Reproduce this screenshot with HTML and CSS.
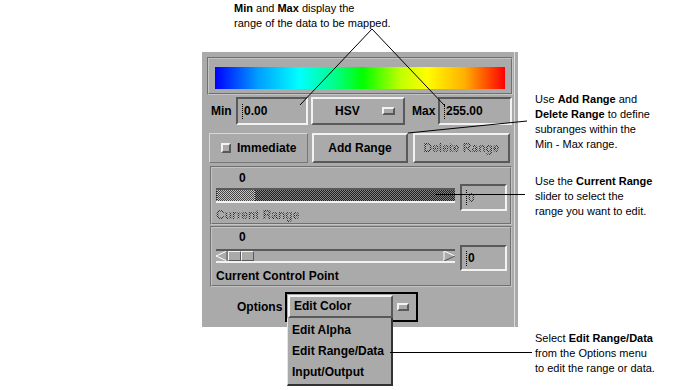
FILE: index.html
```html
<!DOCTYPE html>
<html lang="en">

<head>
  <meta charset="UTF-8">
  <meta name="viewport" content="width=device-width, initial-scale=1.0">
  <title>Colormap Editor - Range Controls</title>
  <link rel="stylesheet" href="styles.css">
</head>

<body>
  <div class="figure">
    <p class="note note-top"><b>Min</b> and <b>Max</b> display the<br>range of the data to be mapped.</p>

    <div class="main">
      <div class="panel">
        <div class="colorbar-frame">
          <div class="colorbar"></div>
        </div>

        <div class="range-row">
          <span class="lbl lbl-min">Min</span>
          <div class="field field-min"><span class="caret"></span>0.00</div>
          <div class="btn btn-hsv">HSV<span class="indicator"></span></div>
          <span class="lbl lbl-max">Max</span>
          <div class="field field-max"><span class="caret"></span>255.00</div>
        </div>

        <div class="button-row">
          <div class="toggle"><span class="check"></span>Immediate</div>
          <div class="btn btn-add">Add Range</div>
          <div class="btn btn-delete"><span class="stipple-text">Delete Range</span></div>
        </div>

        <div class="section section-range">
          <div class="scale-value">0</div>
          <div class="trough trough-disabled"><span class="thumb-disabled"></span></div>
          <div class="field field-small"><span class="caret"></span><span class="stipple-text">0</span></div>
          <div class="scale-label"><span class="stipple-text">Current Range</span></div>
        </div>

        <div class="section section-point">
          <div class="scale-value">0</div>
          <div class="trough">
            <svg class="arrow" width="12" height="10" viewBox="0 0 12 10">
              <polygon points="11,0 11,10 0,5" fill="#aaa" />
              <polyline points="11,0 0,5 11,10" fill="none" stroke="#fff" stroke-width="1" />
              <line x1="11" y1="0" x2="11" y2="10" stroke="#555" />
            </svg>
            <span class="thumb"></span><span class="thumb"></span>
            <svg class="arrow arrow-right" width="12" height="10" viewBox="0 0 12 10">
              <polygon points="1,0 1,10 12,5" fill="#aaa" />
              <polyline points="1,10 1,0 12,5" fill="none" stroke="#fff" stroke-width="1" />
              <line x1="1" y1="10" x2="12" y2="5" stroke="#555" />
            </svg>
          </div>
          <div class="field field-small"><span class="caret"></span>0</div>
          <div class="scale-label">Current Control Point</div>
        </div>

        <div class="options-row">
          <span class="lbl">Options</span>
          <div class="option-menu">
            <div class="option-current">Edit Color</div>
            <span class="indicator"></span>
            <ul class="menu">
              <li>Edit Alpha</li>
              <li>Edit Range/Data</li>
              <li>Input/Output</li>
            </ul>
          </div>
        </div>
      </div>

      <div class="side-notes">
        <p class="note note-add">Use <b>Add Range</b> and<br><b>Delete Range</b> to define<br>subranges within the<br>Min - Max range.</p>
        <p class="note note-current">Use the <b>Current Range</b><br>slider to select the<br>range you want to edit.</p>
        <p class="note note-select">Select <b>Edit Range/Data</b><br>from the Options menu<br>to edit the range or data.</p>
      </div>
    </div>

    <!-- leader lines from the notes to the widgets -->
    <svg class="leaders" width="700" height="390" viewBox="0 0 700 390">
      <line x1="372" y1="29" x2="300" y2="105" />
      <line x1="372" y1="29" x2="445" y2="106" />
      <line x1="408" y1="133" x2="527" y2="121" />
      <line x1="435" y1="194.5" x2="525" y2="194.5" />
      <line x1="390" y1="352.5" x2="532" y2="352.5" />
    </svg>
  </div>
</body>

</html>
```

FILE: styles.css
```css
* {
  box-sizing: border-box;
  margin: 0;
  padding: 0;
}

body {
  background-color: #fff;
  font-family: 'Liberation Sans', Arial, sans-serif;
  color: #000;
}

.figure {
  position: relative;
  width: 700px;
  height: 390px;
  overflow: hidden;
}

/* callout text */
.note {
  font-size: 11px;
  line-height: 15px;
}

.note-top {
  height: 52px;
  padding-left: 234px;
  padding-top: 1px;
}

.main {
  display: flex;
  align-items: flex-start;
}

.side-notes {
  display: flex;
  flex-direction: column;
  margin-left: 17px;
}

.note-add {
  margin-top: 40px;
}

.note-current {
  margin-top: 22px;
}

.note-select {
  margin-top: 112px;
}

.leaders {
  position: absolute;
  left: 0;
  top: 0;
  pointer-events: none;
}

.leaders line {
  stroke: #000;
  stroke-width: 1;
}

/* motif style panel */
.panel {
  margin-left: 202px;
  width: 316px;
  height: 275px;
  padding: 5px 0 0 0;
  background-color: #aaa;
  font-size: 12px;
  font-weight: bold;
  line-height: 14px;
  box-shadow: inset -3px 0 0 #aaa, inset -4px 0 0 #ddd;
}

.colorbar-frame {
  margin: 0 5px;
  height: 38px;
  padding: 8px 6px;
  border: 2px groove #c4c4c4;
}

.colorbar {
  height: 22px;
  background: linear-gradient(to right, #0000ff 0%, #00a0ff 15%, #00ffff 29%, #00ff80 42%, #00ff00 51%, #c0ff00 64%, #ffff00 73%, #ffb000 86%, #ff0000 100%);
}

.range-row {
  display: flex;
  align-items: center;
  height: 28px;
  margin-top: 2px;
}

.lbl-min {
  margin-left: 9px;
  width: 25px;
}

.lbl-max {
  margin-left: 7px;
  width: 26px;
}

.field {
  display: flex;
  align-items: center;
  height: 28px;
  padding-left: 3px;
  border: 2px solid;
  border-color: #595959 #f2f2f2 #f2f2f2 #595959;
  background-color: #aaa;
}

.field-min {
  width: 72px;
}

.field-max {
  width: 74px;
}

.caret {
  display: inline-block;
  width: 3px;
  height: 15px;
  background: repeating-linear-gradient(#000 0 1px, transparent 1px 2px) center / 1px 100% no-repeat;
}

.btn {
  display: flex;
  align-items: center;
  justify-content: center;
  border: 2px solid;
  border-color: #f2f2f2 #595959 #595959 #f2f2f2;
}

.btn-hsv {
  width: 94px;
  height: 28px;
  margin-left: 3px;
  padding-left: 22px;
  justify-content: flex-start;
}

.btn-hsv .indicator {
  margin-left: 22px;
}

.indicator {
  display: inline-block;
  width: 13px;
  height: 8px;
  border: 2px solid;
  border-color: #f2f2f2 #595959 #595959 #f2f2f2;
}

.button-row {
  display: flex;
  height: 30px;
  margin-top: 8px;
}

.toggle {
  display: flex;
  align-items: center;
  width: 99px;
  margin-left: 7px;
  padding-left: 11px;
  border: 1px solid;
  border-color: #d8d8d8 #777 #777 #d8d8d8;
}

.check {
  width: 10px;
  height: 10px;
  margin-right: 6px;
  border: 2px solid;
  border-color: #f2f2f2 #595959 #595959 #f2f2f2;
}

.btn-add {
  width: 96px;
  margin-left: 4px;
}

.btn-delete {
  width: 97px;
  margin-left: 5px;
}

.stipple-text {
  color: transparent;
  background: repeating-conic-gradient(#2a2a2a 0 25%, #b4b4b4 0 50%) 0 0 / 2px 2px;
  -webkit-background-clip: text;
  background-clip: text;
}

/* scale sections */
.section {
  display: grid;
  grid-template-columns: 239px 47px;
  column-gap: 5px;
  margin-left: 8px;
  width: 302px;
  border: 2px groove #c4c4c4;
  padding-left: 4px;
}

.section-range {
  height: 59px;
  margin-top: 3px;
  padding-top: 3px;
}

.section-point {
  height: 61px;
  margin-top: 1px;
  padding-top: 2px;
}

.scale-value {
  padding-left: 23px;
}

.trough {
  grid-row: 2;
  display: flex;
  align-items: center;
  height: 15px;
  margin-top: 2px;
  border-top: 2px solid #595959;
  border-bottom: 2px solid #f2f2f2;
}

.section-point .trough {
  height: 14px;
  margin-top: 3px;
}

.trough-disabled {
  background: repeating-conic-gradient(#222 0 25%, #808080 0 50%) 0 0 / 2px 2px;
}

.thumb-disabled {
  width: 38px;
  height: 11px;
  margin-left: 1px;
  background: repeating-conic-gradient(#444 0 25%, #c8c8c8 0 50%) 0 0 / 2px 2px;
}

.arrow {
  flex: none;
}

.arrow-right {
  margin-left: auto;
}

.thumb {
  width: 13px;
  height: 10px;
  border: 1px solid;
  border-color: #f2f2f2 #595959 #595959 #f2f2f2;
}

.field-small {
  grid-column: 2;
  grid-row: 2 / span 2;
  align-self: start;
  width: 47px;
  height: 27px;
  margin-top: -2px;
}

.section-point .field-small {
  margin-top: -1px;
  height: 26px;
}

.scale-label {
  grid-row: 3;
  margin-top: 3px;
}

/* option menu */
.options-row {
  display: flex;
  align-items: center;
  margin-top: 5px;
  height: 30px;
}

.options-row .lbl {
  margin-left: 35px;
  width: 48px;
}

.option-menu {
  position: relative;
  display: flex;
  align-items: center;
  width: 133px;
  height: 30px;
  border: 2px solid #000;
}

.option-current {
  width: 105px;
  height: 23px;
  margin-left: 1px;
  margin-top: 1px;
  padding-left: 4px;
  line-height: 19px;
  align-self: flex-start;
  border: 2px solid;
  border-color: #f2f2f2 #595959 #595959 #f2f2f2;
}

.option-menu .indicator {
  margin-left: 4px;
  width: 12px;
}

.menu {
  position: absolute;
  left: 0;
  top: 24px;
  width: 106px;
  height: 68px;
  padding: 2px 0 0 4px;
  list-style: none;
  background-color: #aaa;
  border-left: 1px solid #e6e6e6;
  border-right: 2px solid #333;
  border-bottom: 2px solid #333;
}

.menu li {
  height: 21px;
  line-height: 21px;
}
```
